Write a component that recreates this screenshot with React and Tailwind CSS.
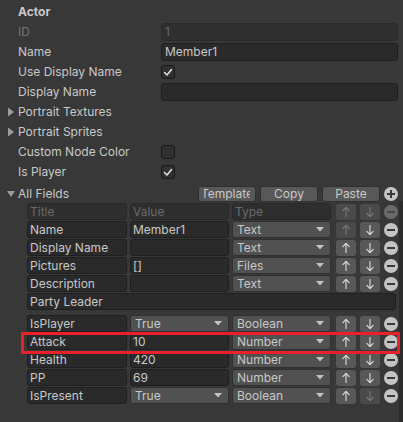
import React from "react";

const font = { fontFamily: "Inter, 'Noto Sans', sans-serif" };

function Tri({ down }) {
  return (
    <svg width="12" height="12" viewBox="0 0 12 12" className="shrink-0">
      {down ? (
        <polygon points="1,3 9,3 5,9" fill="#9c9c9c" />
      ) : (
        <polygon points="2,1.5 8,6 2,10.5" fill="#9c9c9c" />
      )}
    </svg>
  );
}

function Check() {
  return (
    <svg width="12" height="12" viewBox="0 0 12 12">
      <polyline points="2.5,6.5 5,9 9.5,3.5" fill="none" stroke="#dcdcdc" strokeWidth="1.6" strokeLinecap="round" strokeLinejoin="round" />
    </svg>
  );
}

function Checkbox({ checked }) {
  return (
    <div className="w-[14px] h-[14px] rounded-[3px] bg-[#303030] border border-[#181818] flex items-center justify-center">
      {checked && <Check />}
    </div>
  );
}

function Row({ label, children, disabled }) {
  return (
    <div className="flex items-center h-[20px]">
      <div className={`w-[161px] pl-[18px] ${disabled ? "text-[#767676]" : "text-[#c8c8c8]"}`}>{label}</div>
      <div className="flex-1 mr-[5px] flex items-center">{children}</div>
    </div>
  );
}

function TopField({ value, disabled }) {
  return (
    <div
      className={`w-full h-[18px] rounded-[3px] border px-[3px] flex items-center ${
        disabled ? "bg-[#2f2f2f] border-[#2a2a2a] text-[#6a6a6a]" : "bg-[#2a2a2a] border-[#1f1f1f] text-[#c8c8c8]"
      }`}
    >
      {value}
    </div>
  );
}

function Fold({ label, down }) {
  return (
    <div className="flex items-center h-[20px] pl-[6px] text-[#c8c8c8]">
      <Tri down={down} />
      <span>{label}</span>
    </div>
  );
}

function Btn({ label }) {
  return (
    <div className="w-[58px] h-[16px] rounded-[3px] bg-[#585858] border border-[#303030] px-[5px] flex items-center text-[#c8c8c8]">
      <div className="w-full h-[14px] leading-[14px] overflow-hidden flex justify-center">
        <span className="whitespace-nowrap">{label}</span>
      </div>
    </div>
  );
}

function Circle({ plus, dim }) {
  return (
    <div className={`w-[14px] h-[14px] rounded-full shrink-0 flex items-center justify-center ${dim ? "bg-[#6a6a6a]" : "bg-[#c4c4c4]"}`}>
      <svg width="14" height="14" viewBox="0 0 14 14">
        <rect x="3" y="6" width="8" height="2" fill={dim ? "#454545" : "#383838"} />
        {plus && <rect x="6" y="3" width="2" height="8" fill="#383838" />}
      </svg>
    </div>
  );
}

function Cell({ value, w, header }) {
  return (
    <div
      className={`${w} h-[17px] shrink-0 rounded-[3px] border px-[2px] flex items-center whitespace-nowrap overflow-hidden ${
        header ? "bg-[#2e2e2e] border-[#292929] text-[#6a6a6a]" : "bg-[#2a2a2a] border-[#1f1f1f] text-[#c8c8c8]"
      }`}
    >
      {value}
    </div>
  );
}

function Popup({ value, w }) {
  return (
    <div className={`${w} h-[17px] shrink-0 rounded-[3px] border border-[#303030] bg-[#515151] pl-[4px] pr-[6px] flex items-center justify-between text-[#c8c8c8]`}>
      <span>{value}</span>
      <svg width="8" height="5" viewBox="0 0 8 5">
        <polygon points="0,0 8,0 4,4.5" fill="#c4c4c4" />
      </svg>
    </div>
  );
}

function Arrow({ up, disabled }) {
  const c = disabled ? "#7a7a7a" : "#dedede";
  return (
    <div className={`w-[20px] h-[16px] shrink-0 rounded-[3px] flex items-center justify-center ${disabled ? "bg-[#4a4a4a]" : "bg-[#585858]"}`}>
      <svg width="10" height="12" viewBox="0 0 10 12">
        <g fill="none" stroke={c} strokeWidth="1.1" strokeLinecap="round" strokeLinejoin="round">
          <line x1="5" y1="1.5" x2="5" y2="10.5" />
          {up ? <polyline points="1.8,4.7 5,1.5 8.2,4.7" /> : <polyline points="1.8,7.3 5,10.5 8.2,7.3" />}
        </g>
      </svg>
    </div>
  );
}

function TableRow({ title, value, type, valuePopup, upDis, downDis, header, highlight }) {
  return (
    <div className="relative flex items-center h-[17px]">
      <Cell value={title} w="w-[100px]" header={header} />
      <div className="w-[3px] shrink-0" />
      {valuePopup ? <Popup value={value} w="w-[99px]" /> : <Cell value={value} w="w-[99px]" header={header} />}
      <div className="w-[3px] shrink-0" />
      {header ? <Cell value={type} w="w-[99px]" header /> : <Popup value={type} w="w-[99px]" />}
      <div className="w-[5px] shrink-0" />
      <Arrow up disabled={upDis} />
      <div className="w-[4px] shrink-0" />
      <Arrow disabled={downDis} />
      <div className="w-[4px] shrink-0" />
      <Circle dim={header} />
      {highlight && (
        <div className="absolute z-10 left-[-6px] top-[-1px] w-[379px] h-[22px] border-[3px] border-[#e8202a] pointer-events-none" />
      )}
    </div>
  );
}

export default function App() {
  return (
    <div className="w-[403px] h-[422px] bg-[#383838] text-[12px] leading-none flex flex-col overflow-hidden" style={font}>
      <div className="pt-[2px]">
        <div className="h-[20px] flex items-center pl-[18px] font-bold text-[#c8c8c8]">Actor</div>
        <Row label="ID" disabled>
          <TopField value="1" disabled />
        </Row>
        <Row label="Name">
          <TopField value="Member1" />
        </Row>
        <Row label="Use Display Name">
          <Checkbox checked />
        </Row>
        <Row label="Display Name">
          <TopField value="" />
        </Row>
        <Fold label="Portrait Textures" />
        <Fold label="Portrait Sprites" />
        <Row label="Custom Node Color">
          <Checkbox />
        </Row>
        <Row label="Is Player">
          <Checkbox checked />
        </Row>
        <div className="flex items-center h-[18px] mt-[3px] pl-[6px] pr-[5px] text-[#c8c8c8]">
          <Tri down />
          <span className="flex-1">All Fields</span>
          <div className="flex items-center gap-[4px]">
            <Btn label="Template" />
            <Btn label="Copy" />
            <Btn label="Paste" />
            <Circle plus />
          </div>
        </div>
      </div>
      <div className="flex-1 flex">
        <div className="flex-1 pl-[27px] flex flex-col gap-[1px]">
          <TableRow header title="Title" value="Value" type="Type" upDis downDis />
          <TableRow title="Name" value="Member1" type="Text" upDis />
          <TableRow title="Display Name" value="" type="Text" />
          <TableRow title="Pictures" value="[]" type="Files" />
          <TableRow title="Description" value="" type="Text" />
          <div className="w-[369px] h-[17px] rounded-[3px] border border-[#1f1f1f] bg-[#2a2a2a] px-[2px] flex items-center text-[#c8c8c8]">
            Party Leader
          </div>
          <div className="h-[3px]" />
          <TableRow title="IsPlayer" value="True" valuePopup type="Boolean" />
          <TableRow title="Attack" value="10" type="Number" highlight />
          <TableRow title="Health" value="420" type="Number" />
          <TableRow title="PP" value="69" type="Number" />
          <TableRow title="IsPresent" value="True" valuePopup type="Boolean" downDis />
        </div>
        <div className="w-[4px] bg-[#2b2b2b] mt-[-2px]" />
      </div>
    </div>
  );
}
